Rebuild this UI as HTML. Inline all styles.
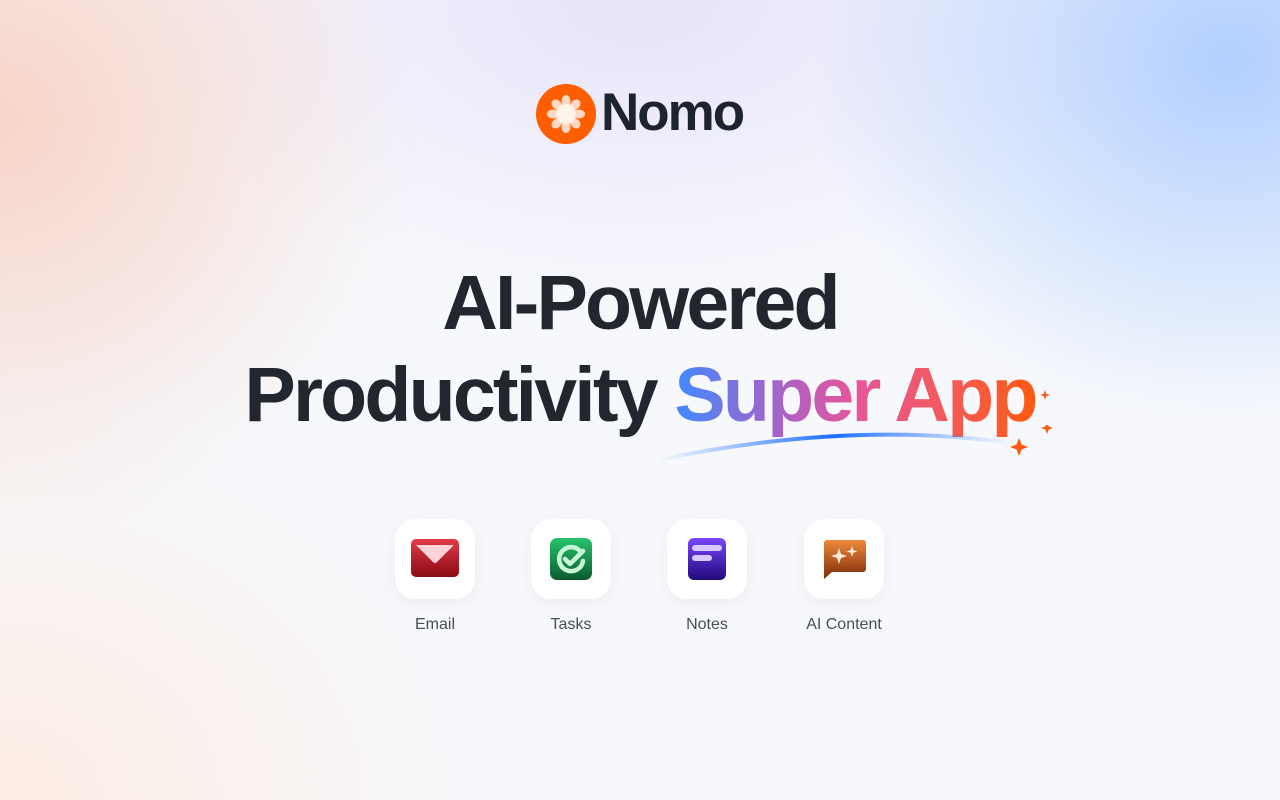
<!DOCTYPE html>
<html><head><meta charset="utf-8"><style>
*{margin:0;padding:0;box-sizing:border-box}
body{width:1280px;height:800px;overflow:hidden;font-family:"Liberation Sans",sans-serif;position:relative;
background:
radial-gradient(ellipse 420px 360px at 1230px 60px,rgba(160,196,255,0.8),rgba(170,200,255,0) 100%),
radial-gradient(ellipse 420px 420px at 0px 120px,rgba(248,205,190,0.85),rgba(248,215,200,0) 100%),
radial-gradient(ellipse 500px 300px at 640px 0px,rgba(230,225,250,0.9),rgba(235,230,250,0) 100%),
radial-gradient(ellipse 500px 400px at 0px 800px,rgba(253,235,225,0.9),rgba(253,240,230,0) 100%),
#f6f8fc;}
.logo{position:absolute;left:536px;top:84px;width:60px;height:60px;border-radius:50%;background:#ff5e00}
.brand{position:absolute;left:601px;top:82px;font-size:53px;font-weight:bold;color:#1f2330;letter-spacing:-2px}
.h{position:absolute;left:0;width:1280px;text-align:center;font-weight:bold;color:#22262e;font-size:77px;letter-spacing:-2.8px;line-height:1}
.grad{background:linear-gradient(90deg,#3d8bff,#9a66d0 25%,#e7559a 50%,#f45a5a 75%,#ff5a10);-webkit-background-clip:text;color:transparent}
.tile{position:absolute;top:519px;width:80px;height:80px;border-radius:20px;background:#fff;box-shadow:0 4px 16px rgba(0,0,0,0.05)}
.tile svg{position:absolute;left:16px;top:16px}
.lab{position:absolute;top:616px;width:140px;text-align:center;font-size:16px;color:#4a4d55}
</style></head><body>
<div class="logo"><svg width="60" height="60" viewBox="0 0 60 60">
<g fill="#ffd9c4" transform="translate(30 30)">
<g id="p"><ellipse cx="0" cy="-13" rx="4.5" ry="6"/></g>
<use href="#p" transform="rotate(45)"/><use href="#p" transform="rotate(90)"/><use href="#p" transform="rotate(135)"/>
<use href="#p" transform="rotate(180)"/><use href="#p" transform="rotate(225)"/><use href="#p" transform="rotate(270)"/><use href="#p" transform="rotate(315)"/>
<circle r="10" fill="#fff3ea"/></g></svg></div>
<div class="brand">Nomo</div>
<div class="h" style="top:265px">AI-Powered</div>
<div class="h" style="top:357px">Productivity <span class="grad">Super App</span></div>
<svg style="position:absolute;left:650px;top:425px" width="420" height="40" viewBox="0 0 420 40">
<defs><linearGradient id="sw" x1="0" x2="1"><stop offset="0" stop-color="#3d8bff" stop-opacity="0"/><stop offset="0.5" stop-color="#1a6dff"/><stop offset="1" stop-color="#3d8bff" stop-opacity="0"/></linearGradient></defs>
<path d="M8 35 Q 200 -5 360 18" stroke="url(#sw)" stroke-width="4" fill="none" stroke-linecap="round"/>
<g fill="#ff5a10">
<path d="M369 13 l2.5 6.5 6.5 2.5 -6.5 2.5 -2.5 6.5 -2.5 -6.5 -6.5 -2.5 6.5 -2.5z"/>
<path d="M397 -3 l1.6 4.4 4.4 1.6 -4.4 1.6 -1.6 4.4 -1.6 -4.4 -4.4 -1.6 4.4 -1.6z"/>
<path d="M395 -35 l1 3 3 1 -3 1 -1 3 -1 -3 -3 -1 3 -1z"/>
</g></svg>
<svg style="position:absolute;left:1038px;top:388px" width="16" height="16"><path d="M7 2 l1.2 3.8 3.8 1.2 -3.8 1.2 -1.2 3.8 -1.2 -3.8 -3.8 -1.2 3.8 -1.2z" fill="#ff5a10"/></svg>

<div class="tile" style="left:395px"><svg width="48" height="48" viewBox="0 0 48 48"><defs><linearGradient id="e" x1="0" y1="0" x2="0" y2="1"><stop offset="0" stop-color="#e23a48"/><stop offset="1" stop-color="#8a0a14"/></linearGradient></defs><rect x="0" y="4" width="48" height="38" rx="5" fill="url(#e)"/><path d="M5 10 H43 L26 27 Q24 29 22 27Z" fill="#ffd3d8"/></svg></div>
<div class="tile" style="left:531px"><svg width="48" height="48" viewBox="0 0 48 48"><defs><linearGradient id="t" x1="0" y1="0" x2="0" y2="1"><stop offset="0" stop-color="#27c46a"/><stop offset="1" stop-color="#0b5a30"/></linearGradient></defs><rect x="3" y="3" width="42" height="42" rx="7" fill="url(#t)"/><path d="M33 16 A12 12 0 1 0 36 26" stroke="#c8f5d8" stroke-width="4.5" fill="none" stroke-linecap="round"/><path d="M18 24 l5 5 13 -13" stroke="#c8f5d8" stroke-width="4.5" fill="none" stroke-linecap="round" stroke-linejoin="round"/></svg></div>
<div class="tile" style="left:667px"><svg width="48" height="48" viewBox="0 0 48 48"><defs><linearGradient id="n" x1="0" y1="0" x2="0" y2="1"><stop offset="0" stop-color="#7a46ff"/><stop offset="1" stop-color="#200a7a"/></linearGradient></defs><rect x="5" y="3" width="38" height="42" rx="6" fill="url(#n)"/><rect x="9" y="10" width="30" height="6" rx="3" fill="#d8c8ff"/><rect x="9" y="20" width="20" height="6" rx="3" fill="#d8c8ff"/></svg></div>
<div class="tile" style="left:804px"><svg width="48" height="48" viewBox="0 0 48 48"><defs><linearGradient id="a" x1="0" y1="0" x2="0" y2="1"><stop offset="0" stop-color="#f08a3a"/><stop offset="1" stop-color="#7a2a0a"/></linearGradient></defs><path d="M4 8 a3 3 0 0 1 3 -3 H43 a3 3 0 0 1 3 3 V34 a3 3 0 0 1 -3 3 H12 L4 44Z" fill="url(#a)"/><path d="M19 13 l2 6 6 2 -6 2 -2 6 -2 -6 -6 -2 6 -2z" fill="#ffe8d6"/><path d="M32 11 l1.4 4 4 1.4 -4 1.4 -1.4 4 -1.4 -4 -4 -1.4 4 -1.4z" fill="#ffe8d6"/></svg></div>
<div class="lab" style="left:365px">Email</div>
<div class="lab" style="left:501px">Tasks</div>
<div class="lab" style="left:637px">Notes</div>
<div class="lab" style="left:774px">AI Content</div>
</body></html>
